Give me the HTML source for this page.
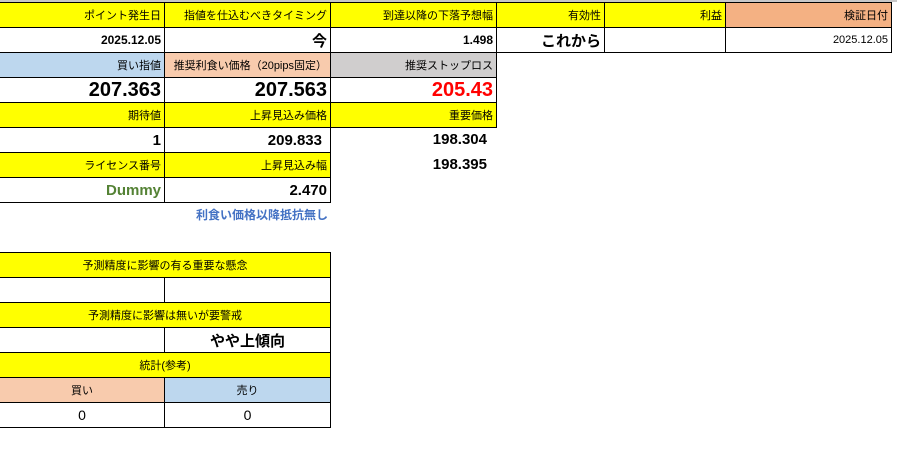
<!DOCTYPE html><html><head><meta charset="utf-8"><style>
body{margin:0;width:897px;height:458px;background:#fff;position:relative;overflow:hidden;font-family:"Liberation Sans","Noto Sans CJK JP",sans-serif;color:#000}
.c{position:absolute;box-sizing:border-box;display:flex;align-items:center;justify-content:flex-end;padding-right:3px;font-size:11px;white-space:nowrap}
.b{border:1px solid #000}
.y{background:#ffff00}.bl{background:#bdd7ee}.pk{background:#f8cbad}.gr{background:#d0cece}.or{background:#f4b183}
.n1{font-size:20px;font-weight:bold}.n2{font-size:15px;font-weight:bold}.n3{font-size:12px;font-weight:bold}
.ctr{justify-content:center;padding:0}
</style></head><body>
<div style="position:absolute;left:0;top:0;width:897px;height:2px;background:#c8c8c8"></div>
<!-- row1 -->
<div class="c b y" style="left:-1px;top:2px;width:166px;height:26px">ポイント発生日</div>
<div class="c b y" style="left:164px;top:2px;width:167px;height:26px">指値を仕込むべきタイミング</div>
<div class="c b y" style="left:330px;top:2px;width:167px;height:26px">到達以降の下落予想幅</div>
<div class="c b y" style="left:496px;top:2px;width:109px;height:26px">有効性</div>
<div class="c b y" style="left:604px;top:2px;width:122px;height:26px">利益</div>
<div class="c b or" style="left:725px;top:2px;width:167px;height:26px">検証日付</div>
<!-- row2 -->
<div class="c b n3" style="left:-1px;top:27px;width:166px;height:26px">2025.12.05</div>
<div class="c b n2" style="left:164px;top:27px;width:167px;height:26px">今</div>
<div class="c b n3" style="left:330px;top:27px;width:167px;height:26px">1.498</div>
<div class="c b n2" style="left:496px;top:27px;width:109px;height:26px">これから</div>
<div class="c b" style="left:604px;top:27px;width:122px;height:26px"></div>
<div class="c b" style="left:725px;top:27px;width:167px;height:26px">2025.12.05</div>
<!-- row3 -->
<div class="c b bl" style="left:-1px;top:52px;width:166px;height:26px">買い指値</div>
<div class="c b pk" style="left:164px;top:52px;width:167px;height:26px">推奨利食い価格（20pips固定）</div>
<div class="c b gr" style="left:330px;top:52px;width:167px;height:26px">推奨ストップロス</div>
<!-- row4 -->
<div class="c b n1" style="left:-1px;top:77px;width:166px;height:26px">207.363</div>
<div class="c b n1" style="left:164px;top:77px;width:167px;height:26px">207.563</div>
<div class="c b n1" style="left:330px;top:77px;width:167px;height:26px;color:#ff0000">205.43</div>
<!-- row5 -->
<div class="c b y" style="left:-1px;top:102px;width:166px;height:26px">期待値</div>
<div class="c b y" style="left:164px;top:102px;width:167px;height:26px">上昇見込み価格</div>
<div class="c b y" style="left:330px;top:102px;width:167px;height:26px">重要価格</div>
<!-- row6 -->
<div class="c b n2" style="left:-1px;top:127px;width:166px;height:26px">1</div>
<div class="c b n2" style="left:164px;top:127px;width:167px;height:26px;padding-right:8px">209.833</div>
<div class="c n2" style="left:330px;top:127px;width:167px;height:25px;padding-right:10px">198.304</div>
<!-- row7 -->
<div class="c b y" style="left:-1px;top:152px;width:166px;height:26px">ライセンス番号</div>
<div class="c b y" style="left:164px;top:152px;width:167px;height:26px">上昇見込み幅</div>
<div class="c n2" style="left:330px;top:152px;width:167px;height:25px;padding-right:10px">198.395</div>
<!-- row8 -->
<div class="c b n2" style="left:-1px;top:177px;width:166px;height:26px;color:#548235">Dummy</div>
<div class="c b n2" style="left:164px;top:177px;width:167px;height:26px">2.470</div>
<div class="c" style="left:164px;top:202px;width:167px;height:25px;font-weight:bold;font-size:12px;color:#4472c4">利食い価格以降抵抗無し</div>
<!-- lower -->
<div class="c b y ctr" style="left:-1px;top:252px;width:332px;height:26px">予測精度に影響の有る重要な懸念</div>
<div class="c b" style="left:-1px;top:277px;width:166px;height:26px"></div>
<div class="c b" style="left:164px;top:277px;width:167px;height:26px"></div>
<div class="c b y ctr" style="left:-1px;top:302px;width:332px;height:26px">予測精度に影響は無いが要警戒</div>
<div class="c b" style="left:-1px;top:327px;width:166px;height:26px"></div>
<div class="c b n2 ctr" style="left:164px;top:327px;width:167px;height:26px">やや上傾向</div>
<div class="c b y ctr" style="left:-1px;top:352px;width:332px;height:26px">統計(参考)</div>
<div class="c b pk ctr" style="left:-1px;top:377px;width:166px;height:26px">買い</div>
<div class="c b bl ctr" style="left:164px;top:377px;width:167px;height:26px">売り</div>
<div class="c b ctr" style="left:-1px;top:402px;width:166px;height:26px;font-size:14px">0</div>
<div class="c b ctr" style="left:164px;top:402px;width:167px;height:26px;font-size:14px">0</div>
</body></html>
